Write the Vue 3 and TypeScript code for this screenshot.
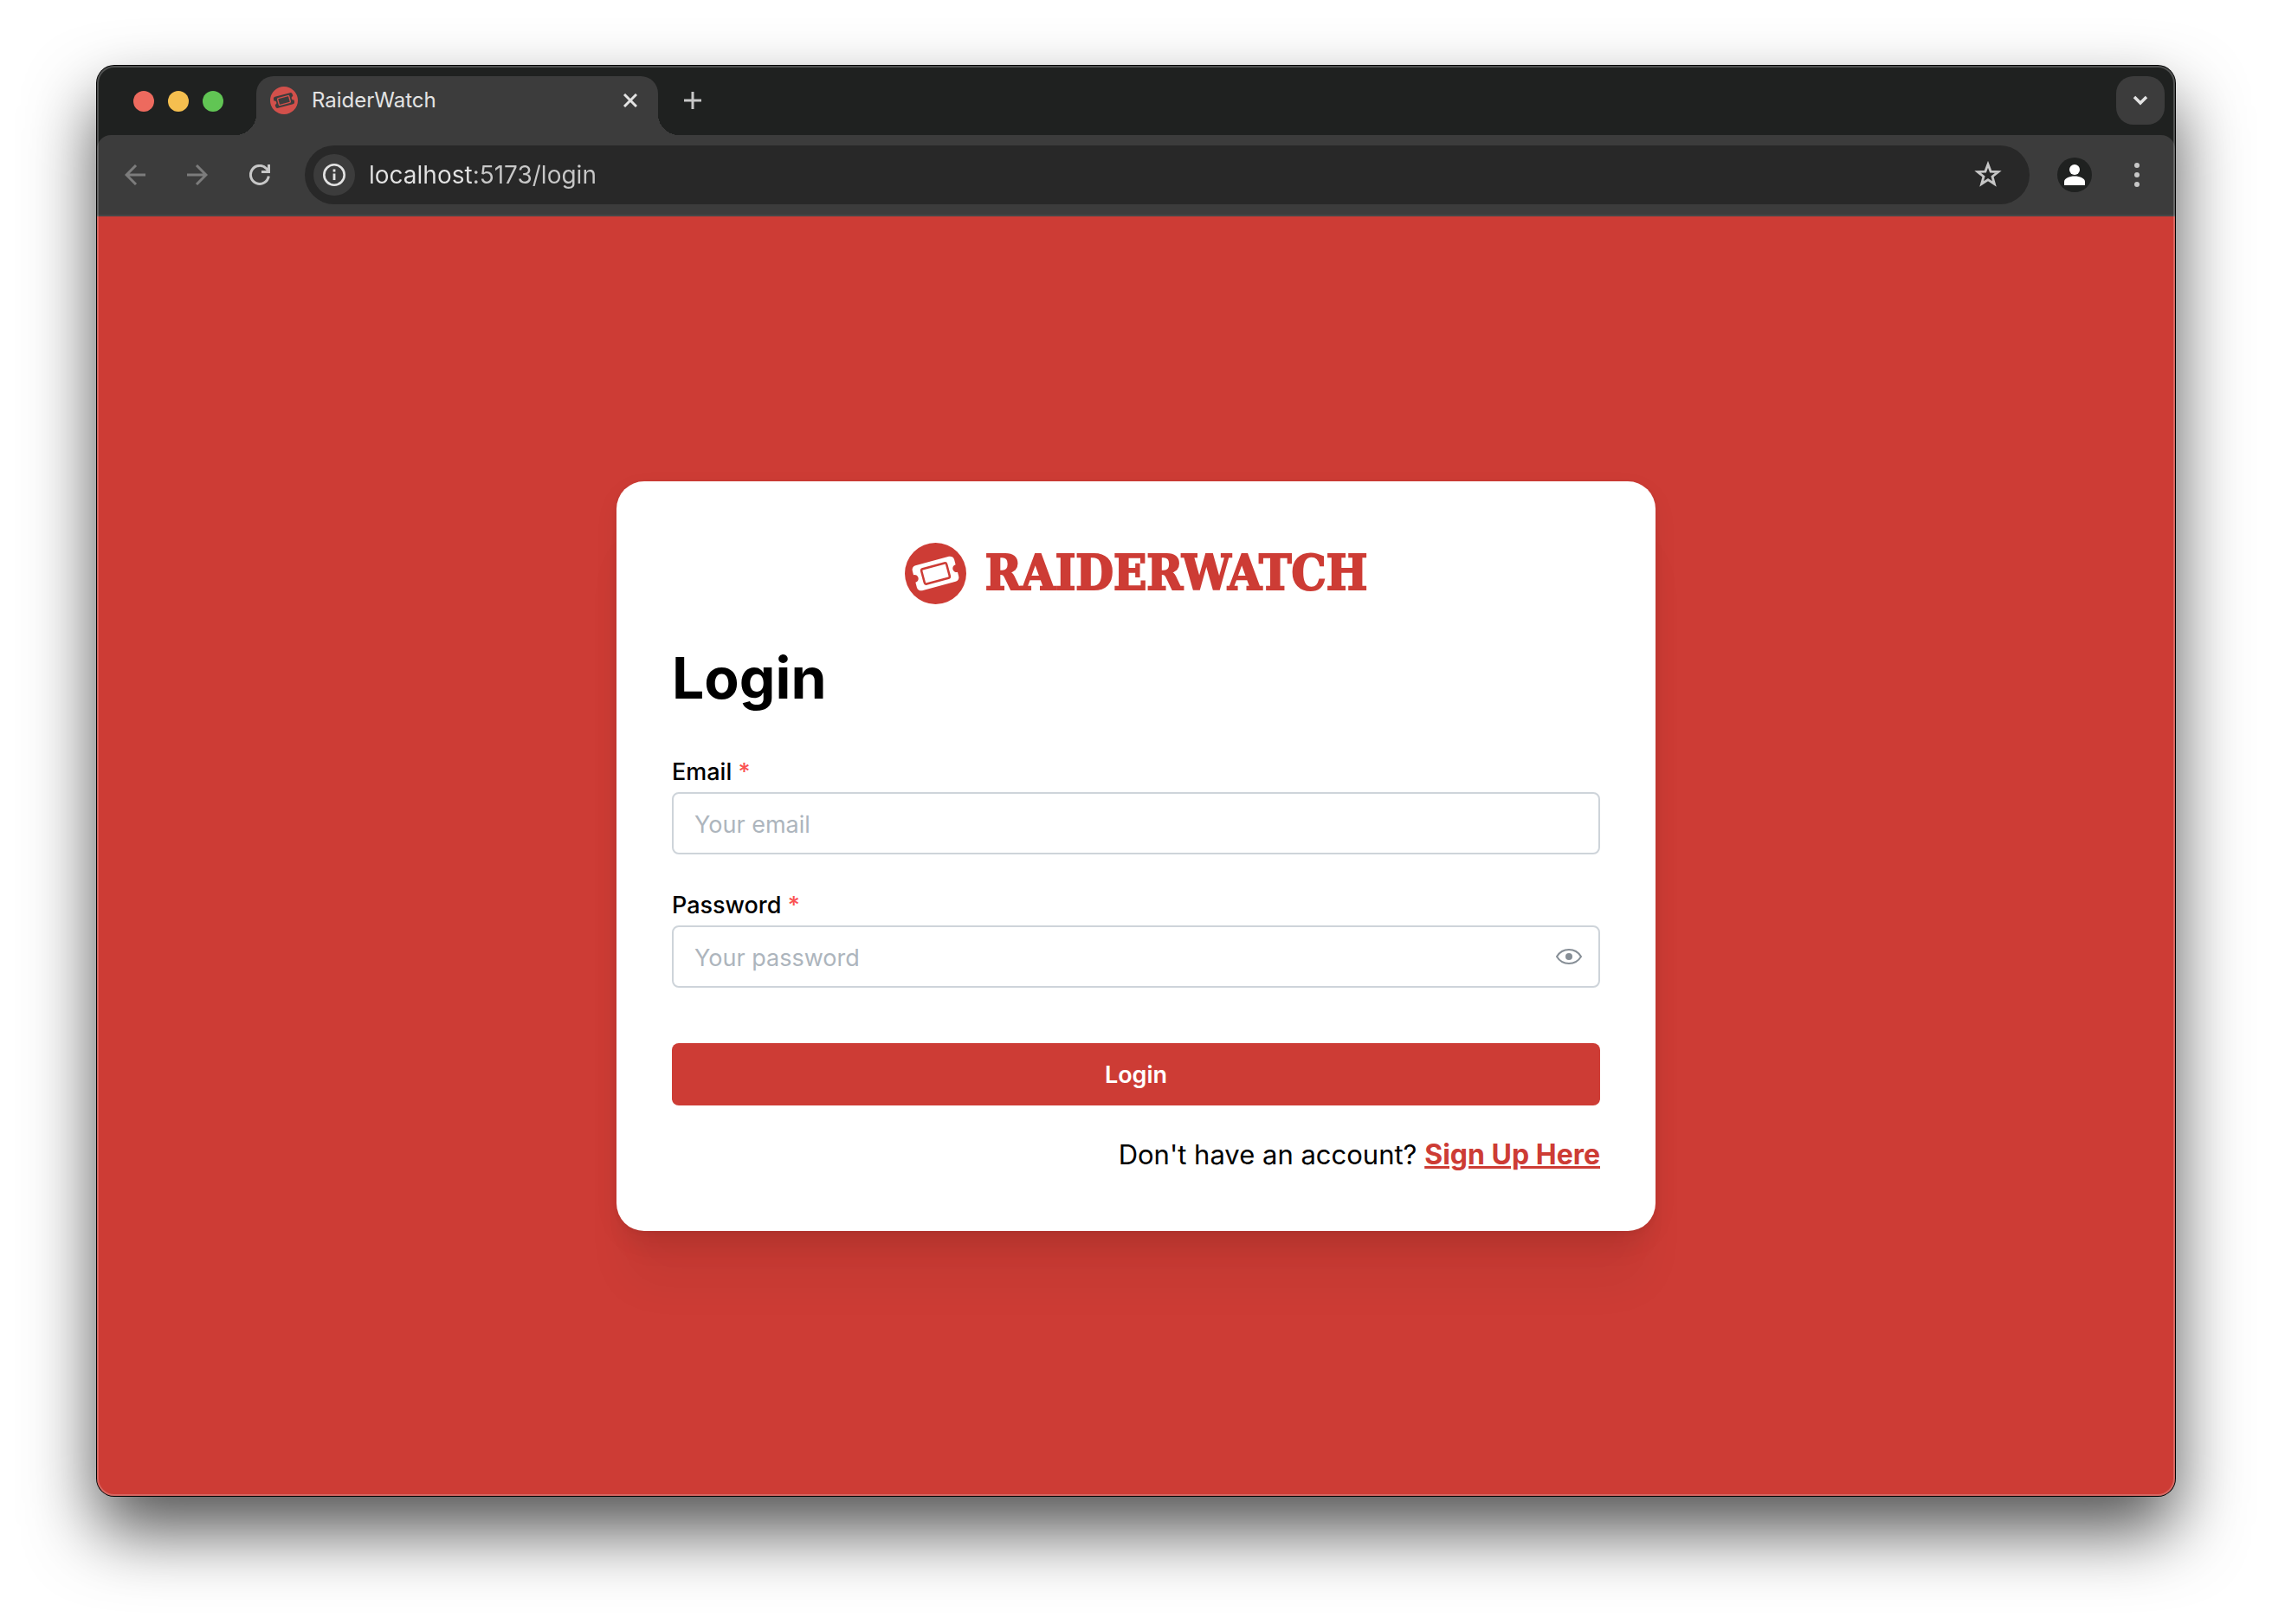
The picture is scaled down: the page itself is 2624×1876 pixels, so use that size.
<script setup lang="ts">
import { ref } from 'vue'

const address = ref('localhost:5173/login')
const email = ref('')
const password = ref('')
const passwordVisible = ref(false)
const lights = ['close', 'minimise', 'zoom']
</script>

<template>
  <div class="desktop">
    <div class="window">
      <header class="chrome">
        <div class="tab-strip">
          <div class="lights">
            <button v-for="light in lights" :key="light" type="button" class="light" :class="light" :aria-label="light"></button>
          </div>
          <div class="tab">
            <svg class="favicon" viewBox="0 0 71 71" aria-hidden="true">
              <circle cx="35.5" cy="35.5" r="35.5" fill="#d2504b" />
              <g transform="rotate(-15 35.5 35.5)">
                <path fill="#3c3c3c" d="M15.5 20.5h40a5 5 0 0 1 5 5v5a5 5 0 0 0 0 10v5a5 5 0 0 1-5 5h-40a5 5 0 0 1-5-5v-5a5 5 0 0 0 0-10v-5a5 5 0 0 1 5-5z" />
                <rect x="20.5" y="26.5" width="30" height="18" rx="2" fill="none" stroke="#d2504b" stroke-width="3" />
              </g>
            </svg>
            <span class="tab-title">RaiderWatch</span>
            <button type="button" class="icon-button small" aria-label="Close tab">
              <svg width="16" height="16" viewBox="0 0 16 16"><path d="M1 1l14 14M15 1L1 15" fill="none" stroke="#e3e3e3" stroke-width="3" /></svg>
            </button>
          </div>
          <button type="button" class="icon-button new-tab" aria-label="New tab">
            <svg width="20" height="20" viewBox="0 0 20 20"><path d="M10 0v20M0 10h20" fill="none" stroke="#c7c7c7" stroke-width="3" /></svg>
          </button>
          <button type="button" class="tab-search" aria-label="Search tabs">
            <svg width="18" height="12" viewBox="0 0 18 12"><path d="M2 2l7 7 7-7" fill="none" stroke="#e3e3e3" stroke-width="3.5" /></svg>
          </button>
        </div>

        <div class="toolbar">
          <div class="nav">
            <button type="button" class="icon-button" aria-label="Back">
              <svg width="24" height="24" viewBox="0 0 24 24"><path d="M24 12H2M13 1L2 12l11 11" fill="none" stroke="#7c7c7c" stroke-width="3" /></svg>
            </button>
            <button type="button" class="icon-button" aria-label="Forward">
              <svg width="24" height="24" viewBox="0 0 24 24"><path d="M0 12h22M11 1l11 11-11 11" fill="none" stroke="#7c7c7c" stroke-width="3" /></svg>
            </button>
            <button type="button" class="icon-button" aria-label="Reload">
              <svg width="24" height="24" viewBox="0 0 24 24"><path d="M22.3 13.5A10.5 10.5 0 1 1 19.7 4.8l2.8 3M22.5 0v8.5H14" fill="none" stroke="#c7c7c7" stroke-width="3" /></svg>
            </button>
          </div>
          <div class="omnibox">
            <button type="button" class="site-info" aria-label="Site information">
              <svg width="28" height="28" viewBox="0 0 28 28"><circle cx="14" cy="14" r="11.7" fill="none" stroke="#e3e3e3" stroke-width="2.6" /><path d="M14 12.5v7.5M14 7.5v3" stroke="#e3e3e3" stroke-width="2.8" /></svg>
            </button>
            <input v-model="address" class="address" type="text" aria-label="Address" spellcheck="false" />
            <button type="button" class="icon-button" aria-label="Bookmark">
              <svg width="32" height="32" viewBox="0 0 32 32"><path d="M16 3.8l3.1 8.300 8.800.4-6.900 5.500 2.400 8.500-7.400-4.900-7.400 4.900 2.400-8.500-6.900-5.500 8.800-.4z" fill="none" stroke="#c7c7c7" stroke-width="2.8" /></svg>
            </button>
          </div>
          <button type="button" class="avatar" aria-label="Profile">
            <svg width="24" height="24" viewBox="0 0 24 24"><circle cx="12" cy="6" r="6" fill="#fff" /><path d="M0 24v-4c0-4 6-6.5 12-6.5S24 16 24 20v4z" fill="#fff" /></svg>
          </button>
          <button type="button" class="icon-button menu" aria-label="Menu">
            <svg width="8" height="28" viewBox="0 0 8 28"><g fill="#c7c7c7"><circle cx="4" cy="3" r="3" /><circle cx="4" cy="14" r="3" /><circle cx="4" cy="25" r="3" /></g></svg>
          </button>
        </div>
      </header>

      <main class="page">
        <form class="card" @submit.prevent>
          <div class="brand">
            <svg class="brand-mark" viewBox="0 0 71 71" aria-hidden="true">
              <circle cx="35.5" cy="35.5" r="35.5" fill="#cd3c35" />
              <g transform="rotate(-15 35.5 35.5)">
                <path fill="#fff" d="M15.5 20.5h40a5 5 0 0 1 5 5v6a4.500 4.500 0 0 0 0 9v5a5 5 0 0 1-5 5h-40a5 5 0 0 1-5-5v-6a4.500 4.500 0 0 0 0-9v-5a5 5 0 0 1 5-5z" />
                <rect x="20.5" y="26.5" width="30" height="18" rx="2" fill="none" stroke="#cd3c35" stroke-width="2.5" />
              </g>
            </svg>
            <span class="wordmark">RAIDERWATCH</span>
          </div>

          <h1>Login</h1>

          <div class="field">
            <label for="email">Email <span class="required">*</span></label>
            <input id="email" v-model="email" class="text-input" type="email" placeholder="Your email" required />
          </div>

          <div class="field">
            <label for="password">Password <span class="required">*</span></label>
            <div class="text-input with-action">
              <input id="password" v-model="password" :type="passwordVisible ? 'text' : 'password'" placeholder="Your password" required />
              <button type="button" class="icon-button" aria-label="Toggle password visibility" @click="passwordVisible = !passwordVisible">
                <svg width="30" height="30" viewBox="0 0 30 30"><path d="M1 15C4 10 9 7 15 7s11 3 14 8c-3 5-8 8-14 8S4 20 1 15z" fill="none" stroke="#868e96" stroke-width="2" /><circle cx="15" cy="15" r="4" fill="#868e96" /></svg>
              </button>
            </div>
          </div>

          <button type="submit" class="submit">Login</button>

          <p class="signup">Don't have an account? <a href="#signup">Sign Up Here</a></p>
        </form>
      </main>
    </div>
  </div>
</template>

<style>
body {
  margin: 0;
  background: #fff;
}
</style>

<style scoped>
.desktop,
.desktop * {
  box-sizing: border-box;
}

.desktop {
  display: flex;
  min-height: 100vh;
  padding: 76px 112px 148px;
  overflow: hidden;
  font-family: Inter, "Liberation Sans", sans-serif;
}

button,
input {
  margin: 0;
  padding: 0;
  border: 0;
  background: none;
  font-family: inherit;
}

svg {
  display: block;
}

.window {
  position: relative;
  display: flex;
  flex: 1;
  flex-direction: column;
  min-width: 0;
  border-radius: 20px;
  background: #1f2120;
  box-shadow: 0 0 0 1px #000, 0 40px 80px rgba(0, 0, 0, 0.68);
}

/* Light rim that runs over the window's own content */
.window::after {
  position: absolute;
  inset: 0;
  border: 2px solid rgba(255, 255, 255, 0.22);
  border-radius: 20px;
  content: "";
  pointer-events: none;
}

.tab-strip {
  display: flex;
  height: 80px;
  padding: 12px 12px 0 42px;
}

.lights {
  display: flex;
  gap: 16px;
  margin: 17px 38px 0 0;
}

.light {
  width: 24px;
  height: 24px;
  border-radius: 50%;
}

.close {
  background: #ed6a5e;
}

.minimise {
  background: #f5bf4f;
}

.zoom {
  background: #61c554;
}

.tab {
  position: relative;
  display: flex;
  align-items: center;
  width: 464px;
  padding: 0 16px 12px;
  border-radius: 20px 20px 0 0;
  background: #3c3c3c;
}

.tab::before,
.tab::after {
  position: absolute;
  bottom: 0;
  width: 24px;
  height: 24px;
  content: "";
}

.tab::before {
  right: 100%;
  background: radial-gradient(circle at 0 0, transparent 24px, #3c3c3c 24px);
}

.tab::after {
  left: 100%;
  background: radial-gradient(circle at 100% 0, transparent 24px, #3c3c3c 24px);
}

.favicon {
  width: 32px;
  height: 32px;
}

.tab-title {
  flex: 1;
  margin-left: 16px;
  color: #e3e3e3;
  font-size: 24px;
  line-height: 32px;
}

.icon-button {
  display: flex;
  flex: none;
  align-items: center;
  justify-content: center;
  width: 48px;
  height: 48px;
  border-radius: 50%;
}

.icon-button.small {
  width: 32px;
  height: 32px;
}

.new-tab {
  margin: 4px 0 0 16px;
}

.tab-search {
  display: flex;
  align-items: center;
  justify-content: center;
  width: 56px;
  height: 56px;
  margin-left: auto;
  border-radius: 20px;
  background: #3c3c3c;
}

.toolbar {
  display: flex;
  align-items: center;
  height: 94px;
  padding: 0 20px;
  border-bottom: 2px solid #474747;
  border-radius: 16px 16px 0 0;
  background: #3c3c3c;
}

.nav {
  display: flex;
  gap: 24px;
}

.omnibox {
  display: flex;
  flex: 1;
  align-items: center;
  height: 68px;
  margin-left: 28px;
  padding: 0 24px 0 10px;
  border-radius: 34px;
  background: #282828;
}

.site-info {
  display: flex;
  align-items: center;
  justify-content: center;
  width: 48px;
  height: 48px;
  border-radius: 50%;
  background: #3c3c3c;
}

/* The host is brighter than the port and the path */
.address {
  flex: 1;
  min-width: 0;
  margin-left: 16px;
  outline: 0;
  background: linear-gradient(90deg, #e3e3e3 120px, #c7c7c7 120px);
  background-clip: text;
  color: transparent;
  font-size: 28px;
  line-height: 40px;
}

.avatar {
  display: flex;
  align-items: center;
  justify-content: center;
  width: 40px;
  height: 40px;
  margin: 0 28px 0 32px;
  border-radius: 50%;
  background: #1f2120;
}

.menu {
  width: 48px;
}

.page {
  display: flex;
  flex: 1;
  align-items: center;
  justify-content: center;
  border-radius: 0 0 20px 20px;
  background: #cd3c35;
}

.card {
  display: flex;
  flex-direction: column;
  width: 50%;
  padding: 64px;
  border-radius: 32px;
  background: #fff;
  box-shadow: 0 2px 6px rgba(0, 0, 0, 0.05), 0 72px 56px -14px rgba(0, 0, 0, 0.05), 0 34px 34px -14px rgba(0, 0, 0, 0.04), 0 10px 30px rgba(0, 0, 0, 0.05);
}

.brand {
  display: flex;
  align-items: center;
  justify-content: center;
  gap: 22px;
  height: 85px;
}

.brand-mark {
  width: 71px;
  height: 71px;
}

.wordmark {
  padding-bottom: 4px;
  color: #cd3c35;
  font-family: "DejaVu Serif Condensed", "DejaVu Serif", serif;
  font-size: 56px;
  font-weight: 700;
  line-height: 64px;
  -webkit-text-stroke: 2px #cd3c35;
}

h1 {
  margin: 36px 0 46px;
  color: #000;
  font-size: 66px;
  font-weight: 700;
  line-height: 84px;
}

.field {
  display: flex;
  flex-direction: column;
  margin-bottom: 38px;
}

label {
  margin-bottom: 2px;
  color: #000;
  font-size: 27px;
  font-weight: 500;
  line-height: 42px;
}

.required {
  color: #fa5252;
}

.text-input {
  height: 72px;
  padding: 2px 24px 0;
  border: 2px solid #ced4da;
  border-radius: 8px;
  background: #fff;
  color: #000;
  font-size: 27px;
}

.with-action {
  display: flex;
  align-items: center;
  padding: 0 10px 0 24px;
}

.with-action input {
  flex: 1;
  min-width: 0;
  padding-top: 2px;
  font-size: 27px;
}

input::placeholder {
  color: #adb5bd;
  opacity: 1;
}

.submit {
  height: 72px;
  margin-top: 26px;
  border-radius: 8px;
  background: #cd3c35;
  color: #fff;
  font-size: 27px;
  font-weight: 600;
}

.signup {
  margin: 33px 0 0;
  color: #000;
  font-size: 31px;
  line-height: 48px;
  text-align: right;
}

.signup a {
  color: #cd3c35;
  font-size: 32px;
  font-weight: 700;
}
</style>
